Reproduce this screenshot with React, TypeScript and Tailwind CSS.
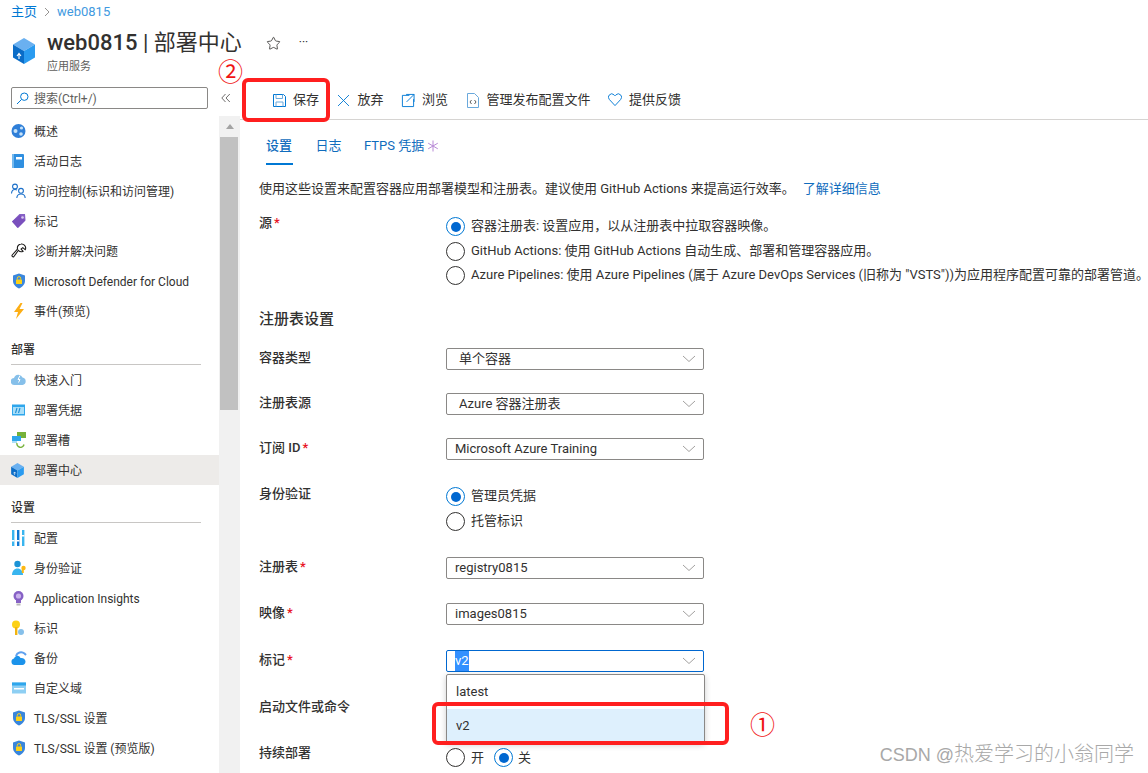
import React from "react";
import { Star } from "lucide-react";

const FONT = "font-['Roboto','Noto_Sans_CJK_SC',sans-serif]";

function Cube({ w = 16, h = 16 }: { w?: number; h?: number }) {
  return (
    <svg width={w} height={h} viewBox="0 0 22 26" className="shrink-0">
      <path d="M11 0 22 6.500 11 13 0 6.500Z" fill="#6ab0f0" />
      <path d="M0 6.500 11 13V26L0 19.500Z" fill="#0a6cc7" />
      <path d="M22 6.500 11 13V26L22 19.500Z" fill="#2a9bf0" />
      <path d="M6 21v-5M4 18 6 15.500 8 18" stroke="#fff" strokeWidth="1.100" fill="none" />
    </svg>
  );
}

function Shield() {
  return (
    <svg width="16" height="16" viewBox="0 0 16 16" className="shrink-0">
      <path d="M8 .5 14 2.500V8c0 3.500-3 6-6 7.500C5 14 2 11.500 2 8V2.500Z" fill="#3a86dc" />
      <rect x="5" y="6.500" width="6" height="4.500" rx=".5" fill="#fcd116" />
      <path d="M6.300 6.500V5.300a1.700 1.700 0 0 1 3.400 0v1.200" stroke="#fcd116" fill="none" strokeWidth="1" />
    </svg>
  );
}

function SideIcon({ name }: { name: string }) {
  switch (name) {
    case "globe":
      return (
        <svg width="16" height="16" viewBox="0 0 16 16"><circle cx="7.500" cy="8" r="7" fill="#2f7fd8" /><circle cx="4.500" cy="8" r="2" fill="#c7e2f8" /><circle cx="10.500" cy="5" r="1.600" fill="#c7e2f8" /><circle cx="10" cy="11" r="1.800" fill="#c7e2f8" /></svg>
      );
    case "book":
      return (
        <svg width="16" height="16" viewBox="0 0 16 16"><rect x="1" y="1" width="12" height="14" rx="1" fill="#2f8fe0" /><rect x="1" y="1" width="2" height="14" fill="#75b9ee" /><rect x="5" y="4" width="6" height="2.500" fill="#fff" /></svg>
      );
    case "people":
      return (
        <svg width="16" height="16" viewBox="0 0 16 16" fill="none" stroke="#1a6fc9" strokeWidth="1.100"><circle cx="4" cy="3.500" r="2.400" /><path d="M.5 10.500c.2-2.400 1.600-4 3.500-4 .8 0 1.400.2 2 .7" /><circle cx="10" cy="7.800" r="2.400" /><path d="M5.800 15c.2-2.500 1.800-4 4.200-4s4 1.500 4.200 4" /></svg>
      );
    case "tag":
      return (
        <svg width="16" height="16" viewBox="0 0 16 16"><path d="M1 8.500 8.500 1h5.500l.5 6-8 8Z" fill="#8661c5" /><path d="M1 8.500 7 15 14.500 7.500 9 2Z" fill="#7a50bd" /><circle cx="11.500" cy="4.500" r="1.300" fill="#d9c8f0" /></svg>
      );
    case "wrench":
      return (
        <svg width="16" height="16" viewBox="0 0 16 16" fill="none" stroke="#1b1a19" strokeWidth="1.100"><path d="M10 1a4 4 0 0 1 4.500 5l-.3.600-2.400-2-1.700 1.400 2 2.300a4 4 0 0 1-4.700-1L2.800 13.700a1.200 1.200 0 0 1-1.600-1.700L6.500 6A4 4 0 0 1 10 1Z" /></svg>
      );
    case "shield":
      return <Shield />;
    case "bolt":
      return (
        <svg width="16" height="16" viewBox="0 0 16 16"><path d="M9.500 0 3 9h4l-2 7 8-10H8.500L11.500 0Z" fill="#fcae15" /></svg>
      );
    case "cloud":
      return (
        <svg width="16" height="16" viewBox="0 0 16 16"><path d="M3.500 13a3.500 3.500 0 0 1-.5-7A4.500 4.500 0 0 1 11.500 5.500 3.800 3.800 0 0 1 11.500 13Z" fill="#86c0ea" /><path d="m9 3.500-2 4h2l-1.500 3" stroke="#fff" strokeWidth="1" fill="none" /></svg>
      );
    case "cred":
      return (
        <svg width="16" height="16" viewBox="0 0 16 16"><rect x="1" y="2.500" width="13" height="11" fill="#2ea6ec" /><rect x="2" y="5" width="11" height="7" fill="#a9def8" /><path d="m6 6-1.500 5M9 6l-1.500 5" stroke="#1d8fd6" strokeWidth="1.100" /></svg>
      );
    case "slot":
      return (
        <svg width="16" height="16" viewBox="0 0 16 16"><rect x="6" y="0" width="9" height="6" fill="#76b13a" /><rect x="1" y="4" width="9" height="5" fill="#2ea6ec" /><rect x="1" y="9" width="5" height="2" fill="#a9def8" /><path d="M6 11a3.500 3.500 0 0 0 7 1.500" stroke="#76b13a" strokeWidth="1.400" fill="none" /></svg>
      );
    case "cube":
      return <Cube w={13} h={15} />;
    case "config":
      return (
        <svg width="16" height="16" viewBox="0 0 16 16"><rect x="1" y="0" width="2.400" height="16" fill="#39b5ef" /><rect x="6" y="0" width="2.400" height="16" fill="#0f78d4" /><rect x="11" y="0" width="2.400" height="16" fill="#39b5ef" /><rect x="1" y="10" width="2.400" height="1.500" fill="#fff" /><rect x="6" y="10" width="2.400" height="1.500" fill="#fff" /><rect x="11" y="5" width="2.400" height="1.500" fill="#fff" /></svg>
      );
    case "auth":
      return (
        <svg width="16" height="16" viewBox="0 0 16 16"><circle cx="6.500" cy="4" r="3.200" fill="#1b93d6" /><path d="M1 15c0-4 2.400-6.500 5.500-6.500S12 11 12 15Z" fill="#39b5ef" /><circle cx="12.500" cy="8" r="2.200" fill="#fcb814" /><rect x="10.800" y="9" width="2" height="4" fill="#fcb814" /></svg>
      );
    case "bulb":
      return (
        <svg width="16" height="16" viewBox="0 0 16 16"><circle cx="7.500" cy="6" r="5" fill="#8661c5" /><circle cx="7.500" cy="6" r="2.600" fill="#c9b2ec" /><rect x="5" y="10" width="5" height="3" fill="#8661c5" /><rect x="5.500" y="13.500" width="4" height="2" fill="#b8b8b8" /></svg>
      );
    case "key":
      return (
        <svg width="16" height="16" viewBox="0 0 16 16"><circle cx="5" cy="4.500" r="4" fill="#fcd116" /><rect x="4" y="7" width="2.400" height="8" fill="#f2b40f" /><circle cx="10" cy="12" r="3" fill="#86c0ea" /></svg>
      );
    case "backup":
      return (
        <svg width="16" height="16" viewBox="0 0 16 16"><path d="M3.500 15a3.300 3.300 0 0 1-.5-6.500C4.500 5 8 5 9.500 8c3-.3 5 1.500 5 3.500S13 15 11.500 15Z" fill="#1b93eb" /><path d="M5 6c1-3.500 5.500-5 8.500-2.500L15 5" stroke="#5ea0ef" strokeWidth="2" fill="none" /></svg>
      );
    case "domain":
      return (
        <svg width="16" height="16" viewBox="0 0 16 16"><rect x="1" y="2.500" width="14" height="11" fill="#8ecff3" /><rect x="1" y="2.500" width="14" height="3" fill="#2ea6ec" /><rect x="3" y="8" width="10" height="1.500" fill="#fff" /></svg>
      );
    default:
      return null;
  }
}

function Chevron() {
  return (
    <svg width="14" height="8" viewBox="0 0 14 8" fill="none" stroke="#8a8886" strokeWidth="0.800" className="shrink-0">
      <path d="M1 1 7 6.500 13 1" />
    </svg>
  );
}

function SideRow({ icon, label, active }: { icon: string; label: string; active?: boolean }) {
  return (
    <div className={`h-[30px] flex items-center pl-[11px] ${active ? "bg-[#edebe9]" : ""}`}>
      <span className="w-[23px] shrink-0 flex items-center">
        <SideIcon name={icon} />
      </span>
      <span className="pt-[2px] text-[12px] text-[#323130] whitespace-nowrap">{label}</span>
    </div>
  );
}

function SideHeading({ label, h }: { label: string; h: string }) {
  return (
    <div className={`${h} pl-[11px] pr-[18px] flex flex-col justify-end`}>
      <div className="text-[12px] font-medium text-[#323130] leading-[18px] pt-[1px] pb-[5px] border-b border-[#c8c6c4] h-[25px]">{label}</div>
    </div>
  );
}

function Sidebar() {
  return (
    <aside className="w-[219px] shrink-0">
      <div className="h-[36px] pl-[11px] pr-[11px] pt-[7px]">
        <div className="h-[22px] border border-[#8a8886] rounded-[2px] flex items-center pl-[4px] gap-[5px]">
          <svg width="13" height="13" viewBox="0 0 13 13" fill="none" stroke="#0078d4" strokeWidth="1">
            <circle cx="8.300" cy="4.700" r="3.700" />
            <path d="M5.500 7.500 1 12" />
          </svg>
          <span className="pt-[2px] text-[12px] text-[#605e5c]">搜索(Ctrl+/)</span>
        </div>
      </div>
      <SideRow icon="globe" label="概述" />
      <SideRow icon="book" label="活动日志" />
      <SideRow icon="people" label="访问控制(标识和访问管理)" />
      <SideRow icon="tag" label="标记" />
      <SideRow icon="wrench" label="诊断并解决问题" />
      <SideRow icon="shield" label="Microsoft Defender for Cloud" />
      <SideRow icon="bolt" label="事件(预览)" />
      <SideHeading label="部署" h="h-[39px]" />
      <SideRow icon="cloud" label="快速入门" />
      <SideRow icon="cred" label="部署凭据" />
      <SideRow icon="slot" label="部署槽" />
      <SideRow icon="cube" label="部署中心" active />
      <SideHeading label="设置" h="h-[38px]" />
      <SideRow icon="config" label="配置" />
      <SideRow icon="auth" label="身份验证" />
      <SideRow icon="bulb" label="Application Insights" />
      <SideRow icon="key" label="标识" />
      <SideRow icon="backup" label="备份" />
      <SideRow icon="domain" label="自定义域" />
      <SideRow icon="shield" label="TLS/SSL 设置" />
      <SideRow icon="shield" label="TLS/SSL 设置 (预览版)" />
    </aside>
  );
}

function Scrollbar() {
  return (
    <div className="w-[21px] shrink-0 flex flex-col">
      <div className="h-[36px] flex items-start pl-[2px] pt-[13px]">
        <svg width="10" height="10" viewBox="0 0 10 10" fill="none" stroke="#605e5c" strokeWidth="0.900">
          <path d="M4.500 1 .8 5l3.700 4M8.800 1 5 5l3.800 4" />
        </svg>
      </div>
      <div className="flex-1 bg-[#f1f1f1] flex flex-col">
        <div className="h-[21px] flex items-center justify-center">
          <div className="w-0 h-0 border-l-[4px] border-r-[4px] border-b-[5px] border-l-transparent border-r-transparent border-b-[#a3a3a3]" />
        </div>
        <div className="h-[273px] bg-[#c1c1c1] ml-[1px] mr-[2px]" />
      </div>
    </div>
  );
}

function ToolItem({ icon, label }: { icon: React.ReactNode; label: string }) {
  return (
    <div className="flex items-center gap-[7px] shrink-0">
      <span className="w-[14px] h-[16px] flex items-center justify-center">{icon}</span>
      <span className="text-[13px] text-[#323130] whitespace-nowrap">{label}</span>
    </div>
  );
}

function Toolbar() {
  return (
    <div className="h-[40px] border-b border-[#d6d4d2] flex items-center pl-[32px] pt-[1px] gap-[17.5px]">
      <ToolItem
        label="保存"
        icon={
          <svg width="13" height="13" viewBox="0 0 13 13" fill="none" stroke="#0078d4" strokeWidth="1">
            <path d="M.5.5h10l2 2v10H.5Z" />
            <path d="M3 .5v4h6.500v-4M3 12.500V8h7v4.500" stroke="#6aa9dc" />
          </svg>
        }
      />
      <ToolItem
        label="放弃"
        icon={
          <svg width="13" height="13" viewBox="0 0 13 13" fill="none" stroke="#0078d4" strokeWidth="0.900">
            <path d="m1 1 11 11M12 1 1 12" />
          </svg>
        }
      />
      <ToolItem
        label="浏览"
        icon={
          <svg width="15" height="15" viewBox="0 0 15 15" fill="none" stroke="#0078d4" strokeWidth="1">
            <path d="M9 2H1.500v12h12V6" />
            <path d="M5.500 1H14v8M14 1 6 9" />
          </svg>
        }
      />
      <ToolItem
        label="管理发布配置文件"
        icon={
          <svg width="12" height="15" viewBox="0 0 12 15" fill="none" stroke="#6aa9dc" strokeWidth="1">
            <path d="M.5.500h7l4 4v10H.5Z" />
            <path d="M4.500 7 3 9l1.500 2M7.500 7 9 9l-1.500 2" stroke="#605e5c" />
          </svg>
        }
      />
      <ToolItem
        label="提供反馈"
        icon={
          <svg width="15" height="14" viewBox="0 0 15 14" fill="none" stroke="#0078d4" strokeWidth="1">
            <path d="M7.500 13 1.500 6.500a3.500 3.500 0 0 1 5-5l1 1 1-1a3.500 3.500 0 0 1 5 5Z" />
          </svg>
        }
      />
    </div>
  );
}

function Tabs() {
  return (
    <div className="h-[45px] pl-[26px] flex gap-[22.500px] text-[13px] text-[#0f6cbd]">
      <div className="h-full w-[27px] border-b-[2px] border-[#0078d4] pt-[17px] font-medium leading-[18px] whitespace-nowrap">设置</div>
      <div className="pt-[17px] leading-[18px] whitespace-nowrap">日志</div>
      <div className="pt-[17px] leading-[18px] whitespace-nowrap flex items-start gap-[3px]">
        FTPS 凭据
        <svg width="12" height="12" viewBox="0 0 12 12" fill="none" stroke="#b88ad6" strokeWidth="1" className="mt-[3px]">
          <path d="M6 .5v11M1.200 3.200l9.600 5.600M10.800 3.200 1.200 8.800" />
        </svg>
      </div>
    </div>
  );
}

function Dot({ on }: { on?: boolean }) {
  return (
    <span
      className={`w-[19px] h-[19px] rounded-full border shrink-0 flex items-center justify-center ${
        on ? "border-[#0078d4]" : "border-[#323130]"
      }`}
    >
      {on && <span className="w-[10px] h-[10px] rounded-full bg-[#0067d0]" />}
    </span>
  );
}

function Radio({ on, label }: { on?: boolean; label: string }) {
  return (
    <div className="flex items-center gap-[6px] whitespace-nowrap">
      <Dot on={on} />
      <span className="text-[13px] text-[#323130] -mt-[1px]">{label}</span>
    </div>
  );
}

function Label({ text, req }: { text: string; req?: boolean }) {
  return (
    <div className="w-[187px] shrink-0 pt-[1px] text-[13px] font-medium text-[#323130] leading-[18px]">
      {text}
      {req && <span className="text-[#e81123] ml-[2px]">*</span>}
    </div>
  );
}

function Select({ value, focus, wide }: { value: string; focus?: boolean; wide?: boolean }) {
  return (
    <div
      className={`w-[258px] h-[22px] rounded-[2px] border flex items-center justify-between pr-[7px] text-[13px] text-[#323130] ${
        focus ? "border-[#0067d0]" : "border-[#8a8886]"
      } ${wide ? "pl-[12px]" : "pl-[8px]"}`}
    >
      {focus ? <span className="bg-[#3390ff] text-white">{value}</span> : <span>{value}</span>}
      <Chevron />
    </div>
  );
}

function Row({ h, label, req, children }: { h: string; label: string; req?: boolean; children?: React.ReactNode }) {
  return (
    <div className={`flex ${h}`}>
      <Label text={label} req={req} />
      <div className="relative">{children}</div>
    </div>
  );
}

function Form() {
  return (
    <div className="pl-[19px]">
      <p className="mt-[15px] h-[18px] text-[13px] leading-[18px] text-[#323130] whitespace-nowrap">
        使用这些设置来配置容器应用部署模型和注册表。建议使用 GitHub Actions 来提高运行效率。
        <span className="text-[#0f6cbd] ml-[8px]">了解详细信息</span>
      </p>
      <div className="mt-[15px] flex h-[96px]">
        <Label text="源" req />
        <div className="pt-[4px] flex flex-col gap-[5.5px]">
          <Radio on label="容器注册表: 设置应用，以从注册表中拉取容器映像。" />
          <Radio label="GitHub Actions: 使用 GitHub Actions 自动生成、部署和管理容器应用。" />
          <Radio label="Azure Pipelines: 使用 Azure Pipelines (属于 Azure DevOps Services (旧称为 &quot;VSTS&quot;))为应用程序配置可靠的部署管道。" />
        </div>
      </div>
      <div className="h-[39px] pt-[1px] text-[15px] font-medium text-[#323130] leading-[18px]">注册表设置</div>
      <Row h="h-[45px]" label="容器类型"><Select value="单个容器" wide /></Row>
      <Row h="h-[45px]" label="注册表源"><Select value="Azure 容器注册表" wide /></Row>
      <Row h="h-[46px]" label="订阅 ID" req><Select value="Microsoft Azure Training" /></Row>
      <Row h="h-[73px]" label="身份验证">
        <div className="pt-[3px] flex flex-col gap-[6px]">
          <Radio on label="管理员凭据" />
          <Radio label="托管标识" />
        </div>
      </Row>
      <Row h="h-[46px]" label="注册表" req><Select value="registry0815" /></Row>
      <Row h="h-[47px]" label="映像" req><Select value="images0815" /></Row>
      <Row h="h-[47px]" label="标记" req>
        <Select value="v2" focus />
        <div className="absolute z-10 left-0 top-[24px] w-[259px] h-[69px] bg-white border border-[#8a8886] rounded-[2px] shadow-[0_2px_6px_rgba(0,0,0,0.2)] text-[13px] text-[#323130]">
          <div className="h-[34px] pl-[9px] flex items-center">latest</div>
          <div className="h-[33px] pl-[9px] flex items-center bg-[#def0fd]">v2</div>
        </div>
      </Row>
      <Row h="h-[46px]" label="启动文件或命令" />
      <Row h="h-[30px]" label="持续部署">
        <div className="flex gap-[10px] pt-[5px]">
          <div className="flex items-center gap-[6px]"><Dot /><span className="text-[13px] text-[#323130]">开</span></div>
          <div className="flex items-center gap-[5px]"><Dot on /><span className="text-[13px] text-[#323130]">关</span></div>
        </div>
      </Row>
    </div>
  );
}

export default function App() {
  return (
    <div className={`relative w-[1148px] h-[773px] overflow-hidden bg-white ${FONT}`}>
      <header className="h-[80px] pl-[11px]">
        <div className="h-[22px] flex items-center text-[13px] text-[#0078d4] gap-[6px] pt-[1px]">
          <span>主页</span>
          <svg width="8" height="10" viewBox="0 0 8 10" fill="none" stroke="#8a8886" strokeWidth="0.900"><path d="m2 1 4 4-4 4" /></svg>
          <span className="text-[#3f9ae0]">web0815</span>
        </div>
        <div className="flex items-start mt-[5px]">
          <span className="pl-[2px] pt-[11px] w-[36px]"><Cube w={22} h={26} /></span>
          <div>
            <div className="flex items-center h-[32px]">
              <span className="text-[22px] leading-[30px] text-[#323130] whitespace-nowrap"><span className="font-medium">web0815</span> | 部署中心</span>
              <Star size={15} strokeWidth={1.300} color="#323130" className="ml-[24px]" />
              <span className="ml-[18px] text-[12px] text-[#323130] leading-[20px] -mt-[2px]">···</span>
            </div>
            <div className="text-[11px] leading-[14px] text-[#605e5c] mt-[1px]">应用服务</div>
          </div>
        </div>
      </header>
      <div className="flex h-[693px]">
        <Sidebar />
        <Scrollbar />
        <main className="flex-1 min-w-0">
          <Toolbar />
          <Tabs />
          <Form />
        </main>
      </div>

      {/* annotations */}
      <div className="absolute left-[242px] top-[78px] w-[88px] h-[44px] border-[4px] border-[#ff1f1f] rounded-[6px]" />
      <div className="absolute z-20 left-[432px] top-[702px] w-[297px] h-[43px] border-[4px] border-[#ff1f1f] rounded-[6px]" />
      <span className="absolute left-[218px] top-[58px] text-[25px] leading-[24px] text-[#f01414] font-['Noto_Sans_CJK_SC',sans-serif]">②</span>
      <span className="absolute left-[750px] top-[711px] text-[25px] leading-[24px] text-[#f01414] font-['Noto_Sans_CJK_SC',sans-serif]">①</span>
      <span className="absolute right-[14px] top-[740px] leading-[28px] text-[#a8a8a8] font-light whitespace-nowrap font-['Liberation_Sans','Noto_Sans_CJK_SC',sans-serif]">
        <span className="text-[18px]">CSDN @</span>
        <span className="text-[20px]">热爱学习的小翁同学</span>
      </span>
    </div>
  );
}
